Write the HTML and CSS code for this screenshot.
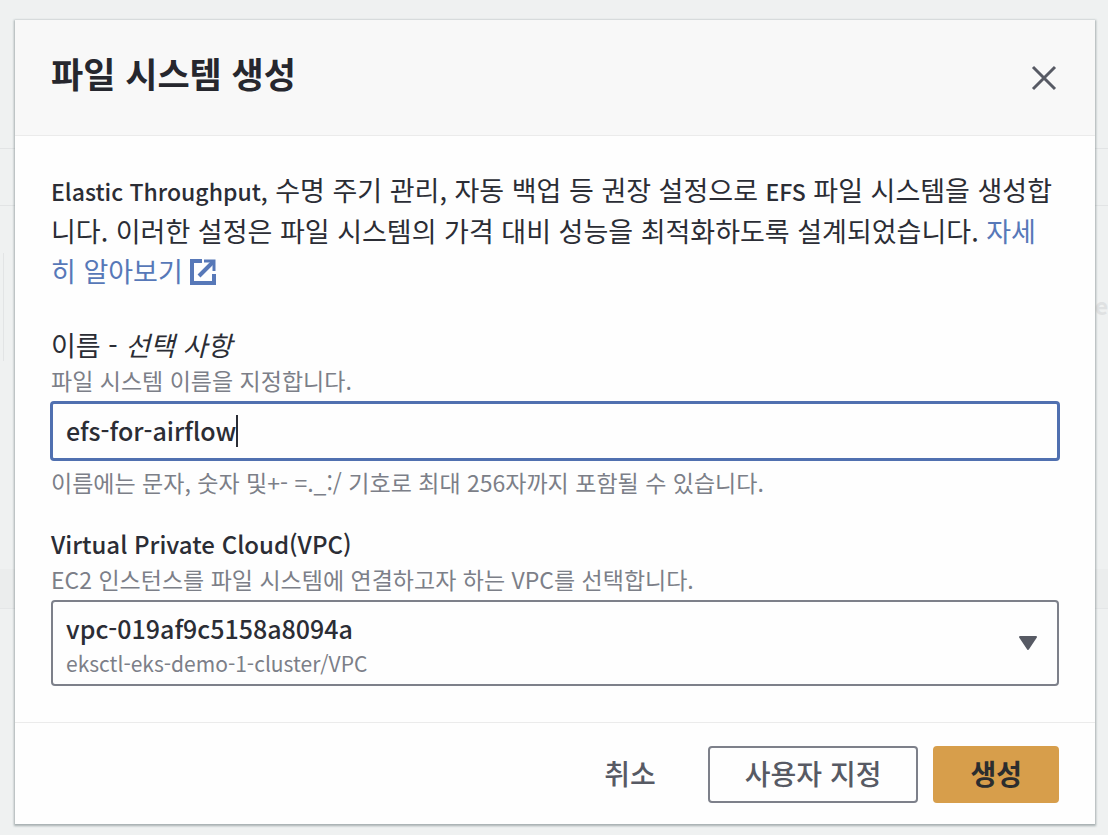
FILE: index.html
```
<!DOCTYPE html>
<html lang="ko">

<head>
    <meta charset="UTF-8">
    <meta name="viewport" content="width=device-width, initial-scale=1.0">
    <title>파일 시스템 생성</title>
    <link rel="stylesheet" href="styles.css">
</head>

<body>
    <!-- Página atrás do modal -->
    <div class="page" aria-hidden="true">
        <div class="page-tab"></div>
        <div class="page-toolbar"></div>
        <div class="page-row"><span>e</span></div>
        <div class="page-band"></div>
    </div>

    <div class="overlay">
        <form class="modal" role="dialog" aria-labelledby="modalTitle">
            <header class="modal-header">
                <h1 id="modalTitle">파일 시스템 생성</h1>
                <button type="button" class="close-button" aria-label="닫기">
                    <svg width="26" height="26" viewBox="0 0 26 26" fill="none" stroke="currentColor" stroke-width="3">
                        <path d="M2 2l22 22M24 2L2 24" />
                    </svg>
                </button>
            </header>

            <div class="modal-content">
                <p class="description"><span class="latin">Elastic Throughput,</span> 수명 주기 관리, 자동 백업 등 권장 설정으로 <span class="latin">EFS</span> 파일 시스템을 생성합니다. 이러한 설정은 파일 시스템의 가격 대비 성능을 최적화하도록 설계되었습니다. <a href="#">자세히 알아보기
                        <svg class="external" width="26" height="26" viewBox="0 0 26 26" fill="none" stroke="currentColor" stroke-width="3">
                            <path d="M12 2H2v22h22V15" stroke-width="4" />
                            <path d="M9 17L23 3" stroke-width="4" />
                            <path d="M14 2h10v10" />
                        </svg></a></p>

                <div class="form-field">
                    <label for="fileSystemName">이름 - <em>선택 사항</em></label>
                    <p class="hint">파일 시스템 이름을 지정합니다.</p>
                    <label class="input-box" for="fileSystemName">
                        <input type="text" id="fileSystemName" name="fileSystemName" value="efs-for-airflow">
                        <span class="caret"></span>
                    </label>
                    <p class="hint">이름에는 문자, 숫자 및+- =._:/ 기호로 최대 256자까지 포함될 수 있습니다.</p>
                </div>

                <div class="form-field">
                    <label class="vpc-label" for="vpc">Virtual Private Cloud(VPC)</label>
                    <p class="hint">EC2 인스턴스를 파일 시스템에 연결하고자 하는 VPC를 선택합니다.</p>
                    <div class="select-box">
                        <select id="vpc" name="vpc">
                            <option>vpc-019af9c5158a8094a</option>
                        </select>
                        <span class="select-detail">eksctl-eks-demo-1-cluster/VPC</span>
                        <svg class="arrow" width="20" height="16" viewBox="0 0 20 16" fill="currentColor" stroke="currentColor" stroke-width="2" stroke-linejoin="round">
                            <path d="M2 2h16l-8 12z" />
                        </svg>
                    </div>
                </div>
            </div>

            <footer class="modal-footer">
                <button type="button" class="button link">취소</button>
                <button type="button" class="button normal">사용자 지정</button>
                <button type="submit" class="button primary">생성</button>
            </footer>
        </form>
    </div>
</body>

</html>
```
FILE: styles.css
```
* {
    box-sizing: border-box;
}

body {
    margin: 0;
    font-family: "Noto Sans CJK KR", sans-serif;
    font-size: 27px;
    line-height: 40px;
    color: #2b2d35;
    background-color: #eff1f1;
}

h1,
p {
    margin: 0;
}

/* Página atrás do modal */
.page {
    position: absolute;
    inset: 0;
    overflow: hidden;
    color: #dfe1e2;
}

.page-tab {
    height: 148px;
}

.page-toolbar {
    height: 58px;
    border-top: 1px solid #e2e4e5;
    border-bottom: 1px solid #e2e4e5;
}

.page-row {
    height: 108px;
    margin: 47px 0 208px 3px;
    padding-top: 32px;
    border-left: 1px solid #e2e4e5;
    text-align: right;
    font-size: 23px;
    font-weight: 700;
}

.page-band {
    height: 40px;
    background-color: #ebeded;
    border-bottom: 1px solid #e4e6e7;
}

.overlay {
    position: relative;
    padding: 20px 13px 10px 15px;
}

.modal {
    background-color: #fefefe;
    box-shadow: 0 1px 2px 1px rgba(80, 95, 100, 0.45);
}

.modal-header {
    display: flex;
    justify-content: space-between;
    align-items: center;
    height: 116px;
    padding: 0 38px 10px 36px;
    background-color: #f8f8f8;
    border-bottom: 1px solid #ebebeb;
}

h1 {
    font-size: 35px;
    line-height: 44px;
    font-weight: 700;
    color: #26272e;
}

.close-button {
    display: flex;
    padding: 10px 0 0;
    color: #575a64;
    background: none;
    border: none;
    cursor: pointer;
}

.modal-content {
    display: flex;
    flex-direction: column;
    gap: 27px;
    padding: 34px 36px 36px;
}

.description {
    margin-bottom: 8px;
}

.latin {
    font-size: 23px;
    font-weight: 500;
}

a {
    color: #5778b8;
    text-decoration: none;
}

.external {
    vertical-align: -3px;
}

.form-field {
    display: flex;
    flex-direction: column;
}

.form-field label {
    line-height: 38px;
}

.form-field .vpc-label {
    font-size: 24px;
    font-weight: 500;
}

.hint {
    font-size: 23px;
    line-height: 32px;
    color: #7c7f88;
}

.input-box {
    display: flex;
    align-items: center;
    height: 60px;
    margin: 5px -1px;
    padding: 0 13px;
    border: 3px solid #5070b0;
    border-radius: 4px;
    cursor: text;
}

.input-box input {
    field-sizing: content;
    padding: 0 0 2px;
    font: inherit;
    font-size: 25px;
    font-weight: 500;
    color: inherit;
    background: none;
    border: none;
    outline: none;
}

.caret {
    width: 2px;
    height: 32px;
    background-color: #2b2d35;
}

.select-box {
    position: relative;
    margin-top: 5px;
}

.select-box select {
    display: block;
    width: 100%;
    height: 86px;
    padding: 6px 60px 38px 13px;
    font: inherit;
    font-size: 25px;
    font-weight: 500;
    color: inherit;
    background-color: #fefefe;
    border: 2px solid #7d808a;
    border-radius: 4px;
    appearance: none;
}

.select-detail {
    position: absolute;
    left: 15px;
    bottom: 7px;
    font-size: 21px;
    line-height: 32px;
    color: #7c7f88;
    pointer-events: none;
}

.arrow {
    position: absolute;
    right: 21px;
    top: 35px;
    color: #575a64;
    pointer-events: none;
}

.modal-footer {
    display: flex;
    justify-content: flex-end;
    gap: 15px;
    padding: 23px 36px 21px;
    border-top: 1px solid #ebebeb;
}

.button {
    height: 57px;
    padding: 0 35px 4px;
    font: inherit;
    font-size: 28px;
    font-weight: 500;
    color: #575a64;
    background-color: #fefefe;
    border: 2px solid #7d808a;
    border-radius: 4px;
    cursor: pointer;
}

.button.link {
    border-color: transparent;
    background: none;
}

.button.primary {
    font-weight: 700;
    color: #2b2d2e;
    background-color: #d79e4b;
    border-color: #d79e4b;
}
```
